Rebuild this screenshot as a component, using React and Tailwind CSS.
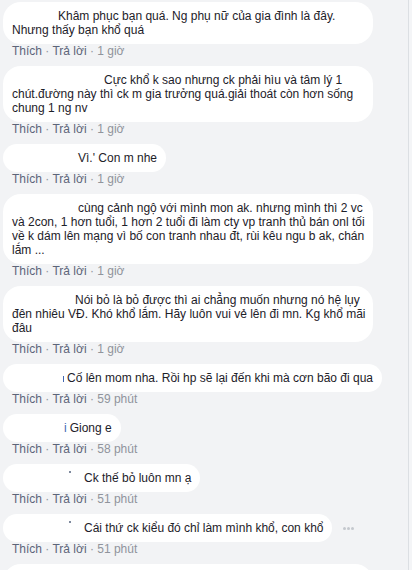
import React from 'react';

const comments = [
  {
    indent: 46,
    lines: ['Khâm phục bạn quá. Ng phụ nữ của gia đình là đây.', 'Nhưng thấy bạn khổ quá'],
    time: '1 giờ',
  },
  {
    indent: 92,
    lines: [
      'Cực khổ k sao nhưng ck phải hìu và tâm lý 1',
      'chút.đường này thì ck m gia trưởng quá.giải thoát còn hơn sống',
      'chung 1 ng nv',
    ],
    time: '1 giờ',
  },
  { indent: 66, lines: ['Vì.\' Con m nhe'], time: '1 giờ', single: true },
  {
    indent: 66,
    lines: [
      'cùng cảnh ngộ với mình mon ak. nhưng mình thì 2 vc',
      'và 2con, 1 hơn tuổi, 1 hơn 2 tuổi đi làm cty vp tranh thủ bán onl tối',
      'về k dám lên mạng vì bố con tranh nhau đt, rùi kêu ngu b ak, chán',
      'lắm ...',
    ],
    time: '1 giờ',
  },
  {
    indent: 63,
    lines: [
      'Nói bỏ là bỏ được thì ai chẳng muốn nhưng nó hệ lụy',
      'đên nhiêu VĐ. Khó khổ lắm. Hãy luôn vui vẻ lên đi mn. Kg khổ mãi',
      'đâu',
    ],
    time: '1 giờ',
  },
  { indent: 51, mark: 'bar', lines: ['Cố lên mom nha. Rồi hp sẽ lại đến khi mà cơn bão đi qua'], time: '59 phút', single: true },
  { indent: 52, mark: 'i', lines: ['Giong e'], time: '58 phút', single: true },
  { indent: 57, mark: 'dot', lines: ['Ck thế bỏ luôn mn ạ'], time: '51 phút', single: true },
  { indent: 57, mark: 'dot', lines: ['Cái thứ ck kiểu đó chỉ làm mình khổ, con khổ'], time: '51 phút', single: true, more: true },
];

const Mark = ({ type }) => {
  if (type === 'bar') {
    return (
      <>
        <span className="inline-block w-[1px] h-[6px] bg-[#4267b2] align-baseline" />
        <span className="inline-block w-[3px]" />
      </>
    );
  }
  if (type === 'i') {
    return <span className="text-[#4267b2] mr-[3px]">i</span>;
  }
  if (type === 'dot') {
    return (
      <>
        <span className="inline-block w-[2px] h-[2px] bg-[#7f8a9e] align-top" />
        <span className="inline-block w-[13px]" />
      </>
    );
  }
  return null;
};

const Comment = ({ c }) => (
  <div className="ml-[3px]">
    <div className="flex items-center">
      <div
        className={`bg-white rounded-[18px] py-[7px] pl-[9px] text-[12px] leading-[14px] text-[#1d2129] ${
          c.single ? 'pr-[9px]' : 'w-[370px]'
        }`}
      >
        {c.lines.map((line, i) => (
          <div key={i} className="whitespace-nowrap">
            {i === 0 && (
              <>
                <span className="inline-block" style={{ width: c.indent }} />
                {c.mark && <Mark type={c.mark} />}
              </>
            )}
            {line}
          </div>
        ))}
      </div>
      {c.more && (
        <div className="ml-[11px] flex gap-[1px]">
          <span className="w-[3px] h-[3px] rounded-full bg-[#c4c8ce]" />
          <span className="w-[3px] h-[3px] rounded-full bg-[#c4c8ce]" />
          <span className="w-[3px] h-[3px] rounded-full bg-[#c4c8ce]" />
        </div>
      )}
    </div>
    <div className="pl-[9px] text-[12px] leading-[14px] mb-[8px] whitespace-nowrap">
      <span className="text-[#5d6579]">Thích</span>
      <span className="text-[#90949c]"> · </span>
      <span className="text-[#5d6579]">Trả lời</span>
      <span className="text-[#90949c]"> · {c.time}</span>
    </div>
  </div>
);

export default function App() {
  return (
    <div
      className="w-[412px] h-[570px] overflow-hidden bg-[#f2f3f5] flex"
      style={{ fontFamily: '"Liberation Sans", Arial, sans-serif' }}
    >
      <div className="w-[409px] h-full border-r border-[#dcdfe3] pt-[2px]">
        {comments.map((c, i) => (
          <Comment key={i} c={c} />
        ))}
        <div className="ml-[3px] w-[370px] h-[20px] bg-white rounded-t-[18px]" />
      </div>
      <div className="flex-1 bg-[#f4f5f7]" />
    </div>
  );
}
